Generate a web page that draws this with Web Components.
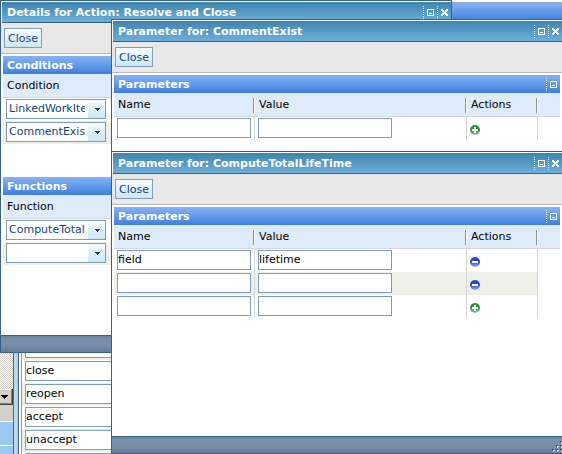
<!DOCTYPE html>
<html lang="en">
<head>
<meta charset="utf-8">
<title>Workflow action details</title>
<style>
  html, body { height: 100%; }
  body { margin: 0; overflow: hidden; font: 11px/14px "DejaVu Sans", Verdana, sans-serif; color: #000; background: #fff; }
</style>
</head>
<body>
<work-desktop>
  <tool-window class="details" heading="Details for Action: Resolve and Close">
    <panel-section heading="Conditions">
      <choice-table heading="Condition" values="LinkedWorkItems,CommentExist"></choice-table>
    </panel-section>
    <panel-section heading="Functions">
      <choice-table heading="Function" values="ComputeTotalLifeTime,"></choice-table>
    </panel-section>
  </tool-window>
  <tool-window class="comment" heading="Parameter for: CommentExist">
    <panel-section heading="Parameters" collapsible>
      <param-table rows='[["",""]]'></param-table>
    </panel-section>
  </tool-window>
  <tool-window class="lifetime" heading="Parameter for: ComputeTotalLifeTime">
    <panel-section heading="Parameters" collapsible>
      <param-table rows='[["field","lifetime"],["",""],["",""]]'></param-table>
    </panel-section>
  </tool-window>
</work-desktop>
<script>
const icons = {
  minimize: '<svg width="7" height="7" viewBox="0 0 7 7" shape-rendering="crispEdges"><path d="M.5.5h6v6h-6z" fill="none" stroke="#fff"/><path d="M2 4h3v1H2z" fill="#fff"/></svg>',
  close: '<svg width="7" height="7" viewBox="0 0 7 7" shape-rendering="crispEdges"><path fill="#fff" d="M0 0h2v1h1v1h1V1h1V0h2v2H6v1H5v1h1v1h1v2H5V6H4V5H3v1H2v1H0V5h1V4h1V3H1V2H0z"/></svg>',
  round: (id, from, to, glyph) => `<svg width="10" height="10" viewBox="0 0 10 10"><defs><linearGradient id="${id}" x2="0" y2="1"><stop offset=".45" stop-color="${from}"/><stop offset="1" stop-color="${to}"/></linearGradient></defs><circle cx="5" cy="5" r="5" fill="url(#${id})"/><path d="${glyph}" fill="#fff"/></svg>`
};
icons.add = icons.round('green', '#1e9435', '#8fceb0', 'M4 2h2v2h2v2H6v2H4V6H2V4h2z');
icons.remove = icons.round('blue', '#2449d2', '#8aaef8', 'M2 4h6v2H2z');

const shared = `
  * { box-sizing: border-box; }
  button, input, select { font: inherit; margin: 0; }
  svg { display: block; }
  .icon { display: block; padding: 0; border: 0; background: none; flex: none; }
  .dots { flex: none; width: 1px; height: 13px; background: repeating-linear-gradient(#e4effa 0 1px, transparent 1px 2px); }
`;
const tableCss = `
  table { width: 100%; border-collapse: separate; border-spacing: 0; table-layout: fixed; }
  th { height: 24px; padding: 0 4px; font-weight: 400; text-align: left; background: #deebf9; border-bottom: 1px solid #d4d8dc; }
  td { height: 23px; padding: 1px 3px 2px; vertical-align: top; }
`;

class BaseElement extends HTMLElement {
  connectedCallback() {
    if (this.shadowRoot) return;
    this.attachShadow({ mode: 'open' }).innerHTML = this.template();
  }
}

class WorkDesktop extends BaseElement {
  template() {
    return `<style>${shared}
      :host { display: block; position: relative; height: 100%; overflow: hidden; }
      .page { height: 100%; display: flex; flex-direction: column; }
      .bar { height: 19px; margin-top: 2px; flex: none; border-top: 1px solid #8fa9c8; background: linear-gradient(#86b2f4, #3f7edc); }
      .columns { flex: 1; min-height: 0; display: flex; align-items: stretch; }
      .list { width: 13px; display: flex; flex-direction: column; justify-content: flex-end; background: #99c8f0; }
      .track { flex: 1; background: repeating-conic-gradient(#d4d0c8 0 25%, #fff 0 50%) 0 0 / 2px 2px; }
      .down { width: 13px; height: 16px; padding: 0 4px 0 0; border: solid #404040; border-width: 0 1px 1px 0; background: #d4d0c8; box-shadow: inset -1px -1px #808080, inset 0 1px #fff; display: grid; place-items: center; }
      .foot { height: 17px; background: #d4d0c8; border-bottom: 1px solid #fff; }
      .item { height: 24px; border-bottom: 1px solid #fff; }
      .item:last-child { height: 8px; border: 0; }
      .splitter { width: 6px; border: solid #3f6488; border-width: 0 1px; background: linear-gradient(90deg, #c0dff2, #a9d0ea); }
      .names { flex: 1; margin-left: 2px; border-left: 1px solid #7f9db9; display: flex; flex-direction: column; justify-content: flex-end; }
      .row { height: 23px; flex: none; padding: 1px 3px 2px; }
      .row:nth-child(odd) { background: #f0f0eb; }
      .row:last-child { height: 2px; padding-bottom: 0; background: #fff; overflow: hidden; }
      input { display: block; width: 134px; height: 20px; padding: 0 0 2px; border: 1px solid #7f9db9; background: #fff; }
      ::slotted(.details) { position: absolute; inset: 0 110px 101px 0; }
      ::slotted(.comment) { position: absolute; top: 19px; left: 111px; right: -1px; bottom: 120px; }
      ::slotted(.lifetime) { position: absolute; top: 151px; left: 111px; right: -1px; bottom: 0; }
    </style>
    <div class="page">
      <div class="bar"></div>
      <div class="columns">
        <div class="list">
          <div class="track"></div>
          <button class="down" aria-label="Scroll down"><svg width="7" height="4" viewBox="0 0 7 4" shape-rendering="crispEdges"><path d="M0 0h7v1H6v1H5v1H4v1H3V3H2V2H1V1H0z"/></svg></button>
          <div class="foot"></div><div class="item"></div><div class="item"></div>
        </div>
        <div class="splitter"></div>
        <div class="names">
          ${['', 'close', 'reopen', 'accept', 'unaccept', ''].map((v, i) => `<div class="row"><input aria-label="Action ${i + 1}" value="${v}"></div>`).join('')}
        </div>
      </div>
    </div>
    <slot></slot>`;
  }
}

class ToolWindow extends BaseElement {
  template() {
    return `<style>${shared}
      :host { box-sizing: border-box; display: flex; flex-direction: column; border: 1px solid #3c5f85; background: #fff; }
      header { flex: none; height: 22px; display: flex; align-items: center; gap: 3px; padding: 0 3px 0 5px; border: solid #fff; border-width: 1px 0 0 1px; box-shadow: inset 0 -1px #3c5f85; background: linear-gradient(#3f84ae, #6eb1dc); color: #fff; }
      h2 { flex: 1; margin: 0; font: inherit; font-weight: 700; white-space: nowrap; }
      .tools { flex: none; height: 31px; display: flex; align-items: center; padding-left: 3px; background: #e8e8e8; border-bottom: 1px solid #b9b9b9; }
      .tools button { height: 20px; padding: 2px 3px 0; border: 1px solid #7f9db9; background: linear-gradient(#f6fcff, #cde7f5); color: #16437e; }
      main { flex: 1; min-height: 0; display: flex; flex-direction: column; gap: 33px; padding: 2px 2px 0; }
      footer { flex: none; height: 17px; display: flex; justify-content: flex-end; align-items: flex-end; border-top: 1px solid #3c5f85; background: linear-gradient(#667f9c, #7b91aa 3px, #768ca9 10px, #647b99); }
    </style>
    <header><h2>${this.getAttribute('heading')}</h2><span class="dots"></span><button class="icon" aria-label="Minimize">${icons.minimize}</button><span class="dots"></span><button class="icon" aria-label="Close window">${icons.close}</button></header>
    <div class="tools"><button>Close</button></div>
    <main><slot></slot></main>
    <footer><svg width="11" height="12" viewBox="1 0 11 12" shape-rendering="crispEdges"><path fill="#34567c" d="M10 0h2v2h-2zM6 4h2v2H6zM10 4h2v2h-2zM2 8h2v2H2zM6 8h2v2H6zM10 8h2v2h-2z"/><path fill="#e8f1fa" d="M11 1h1v2h-1zM7 5h2v1H8v1H7zM11 5h1v2h-1zM3 9h2v1H4v1H3zM7 9h2v1H8v1H7zM11 9h1v2h-1z"/></svg></footer>`;
  }
}

class PanelSection extends BaseElement {
  template() {
    return `<style>${shared}
      :host { display: block; }
      header { height: 18px; display: flex; align-items: center; gap: 3px; padding: 0 3px 0 4px; background: linear-gradient(#86b2f4, #629bea 50%, #3f7edb); color: #fff; }
      h3 { flex: 1; margin: 0; padding-top: 2px; font: inherit; font-weight: 700; }
    </style>
    <header><h3>${this.getAttribute('heading')}</h3>${this.hasAttribute('collapsible') ? `<span class="dots"></span><button class="icon" aria-label="Collapse">${icons.minimize}</button>` : ''}</header>
    <slot></slot>`;
  }
}

class ChoiceBox extends BaseElement {
  template() {
    const value = this.getAttribute('value');
    return `<style>${shared}
      :host { display: grid; width: 100px; height: 20px; }
      select { grid-area: 1 / 1; width: 100%; height: 20px; padding: 0 20px 0 2px; appearance: none; border: 1px solid #7f9db9; border-radius: 0; color: #16437e; background: linear-gradient(#f6fcff, #c9e5f4) right / 17px 100% no-repeat #fff; }
      svg { grid-area: 1 / 1; justify-self: end; align-self: center; margin-right: 6px; pointer-events: none; }
    </style>
    <select aria-label="${this.getAttribute('label')}"><option>${value}</option></select>
    <svg width="5" height="3" viewBox="0 0 5 3" shape-rendering="crispEdges"><path fill="#16437e" d="M0 0h5v1H4v1H3v1H2V2H1V1H0z"/></svg>`;
  }
}

class ChoiceTable extends BaseElement {
  template() {
    const heading = this.getAttribute('heading');
    return `<style>${shared}${tableCss}
      :host { display: block; }
      tbody tr:nth-child(even) { background: #f0f0eb; }
    </style>
    <table><thead><tr><th>${heading}</th></tr></thead>
    <tbody>${this.getAttribute('values').split(',').map((v, i) => `<tr><td><choice-box label="${heading} ${i + 1}" value="${v}"></choice-box></td></tr>`).join('')}</tbody></table>`;
  }
}

class ParamTable extends BaseElement {
  template() {
    const rows = JSON.parse(this.getAttribute('rows'));
    const row = ([name, value], i) => {
      const last = i === rows.length - 1;
      return `<tr><td><input aria-label="Name ${i + 1}" value="${name}"></td><td><input aria-label="Value ${i + 1}" value="${value}"></td><td class="act"><button class="icon" aria-label="${last ? 'Add' : 'Remove'}">${last ? icons.add : icons.remove}</button></td><td></td></tr>`;
    };
    return `<style>${shared}${tableCss}
      :host { display: block; }
      .name { width: 141px; } .act-col { width: 71px; } .end { width: 22px; }
      th:not(:last-child) { background: linear-gradient(90deg, #8f9288 1px, #fff 1px) right 5px / 2px 15px no-repeat #deebf9; }
      td:not(:last-child) { border-right: 1px solid #d6d6d6; }
      tr:nth-child(even) td:not(:last-child) { background: #f0f0eb; }
      td.act { padding-top: 8px; }
      input { display: block; width: 134px; height: 20px; padding: 0 0 2px; border: 1px solid #7f9db9; background: #fff; }
    </style>
    <table><colgroup><col class="name"><col><col class="act-col"><col class="end"></colgroup>
    <thead><tr><th>Name</th><th>Value</th><th>Actions</th><th></th></tr></thead>
    <tbody>${rows.map(row).join('')}</tbody></table>`;
  }
}

customElements.define('choice-box', ChoiceBox);
customElements.define('choice-table', ChoiceTable);
customElements.define('param-table', ParamTable);
customElements.define('panel-section', PanelSection);
customElements.define('tool-window', ToolWindow);
customElements.define('work-desktop', WorkDesktop);
</script>
</body>
</html>
